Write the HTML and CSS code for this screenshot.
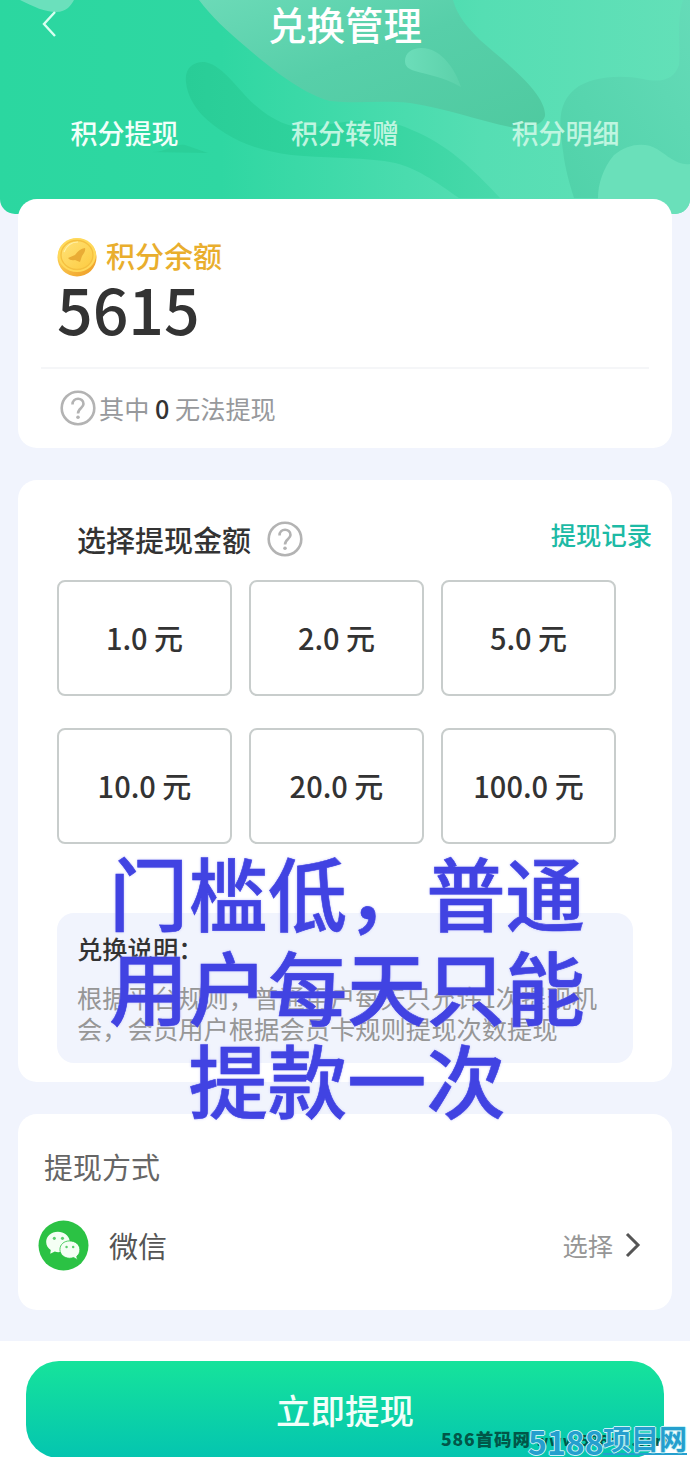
FILE: index.html
```html
<!DOCTYPE html>
<html lang="zh-CN">
<head>
  <meta charset="UTF-8" />
  <title>兑换管理</title>
  <link rel="stylesheet" href="styles.css">
</head>
<body>
  <header class="header">
    <svg class="header-bg" viewBox="0 0 690 214" preserveAspectRatio="none">
      <defs>
        <linearGradient id="base" x1="0" y1="0" x2="1" y2="0">
          <stop offset="0" stop-color="#2bd7a0" />
          <stop offset="0.32" stop-color="#2fd7a2" />
          <stop offset="0.7" stop-color="#55deb3" />
          <stop offset="1" stop-color="#63e0b8" />
        </linearGradient>
        <linearGradient id="leaf" x1="0" y1="0" x2="1" y2="1">
          <stop offset="0" stop-color="#6bdab7" />
          <stop offset="0.45" stop-color="#57cfa9" />
          <stop offset="1" stop-color="#4fcaa0" />
        </linearGradient>
        <linearGradient id="worm" x1="0" y1="0" x2="1" y2="0">
          <stop offset="0" stop-color="#29cd97" />
          <stop offset="0.5" stop-color="#31d49e" />
          <stop offset="1" stop-color="#49d9ab" />
        </linearGradient>
        <linearGradient id="drop" x1="0" y1="0" x2="1" y2="0">
          <stop offset="0" stop-color="#6cddb9" />
          <stop offset="1" stop-color="#5cd1aa" />
        </linearGradient>
        <linearGradient id="curl" x1="0" y1="1" x2="1" y2="0">
          <stop offset="0" stop-color="#50d2a9" />
          <stop offset="1" stop-color="#65dbb8" />
        </linearGradient>
      </defs>
      <rect width="690" height="214" fill="url(#base)" />
      <path d="M20 0C34 7 45 12 56 12C67 12 71 5 74 0Z" fill="#6be0bc" />
      <path d="M186 82C184 67 195 61 205 62C224 66 237 89 255 105C272 120 289 128 310 128C350 119 386 117 412 130C447 144 473 169 500 198H459C437 183 415 165 384 161C350 157 326 158 291 155C250 150 222 135 202 115C193 105 187 94 186 82Z" fill="url(#worm)" />
      <path d="M150 152C166 153 174 143 185 145L208 153Z" fill="#2bcf99" />
      <path d="M199 0H453C457 16 469 29 480 40C505 62 547 94 545 116C543 125 527 130 510 127C477 120 445 108 410 103C381 100 357 104 330 101C303 94 273 70 246 47C228 32 211 16 199 0Z" fill="url(#leaf)" />
      <path d="M405 61C405 53 412 48 421 48C443 48 456 72 461 87C443 77 429 75 415 71C408 69 405 66 405 61Z" fill="url(#drop)" />
      <path d="M690 0H683C676 21 681 48 679 65C674 80 661 83 643 79C617 74 589 78 575 89C556 105 560 126 563 151C565 169 570 185 574 198H690Z" fill="url(#curl)" />
      <path d="M598 198C598 184 603 168 614 155C628 143 646 142 657 149C668 156 678 166 690 164V214H598Z" fill="#6ae0ba" />
    </svg>
    <div class="nav">
      <svg class="back" viewBox="0 0 16 28"><path d="M14 2L3 14L14 26" /></svg>
      <h1>兑换管理</h1>
    </div>
    <div class="tabs">
      <span class="tab active">积分提现</span>
      <span class="tab">积分转赠</span>
      <span class="tab">积分明细</span>
    </div>
  </header>

  <main>
    <section class="card balance">
      <div class="balance-label">
        <svg class="coin" viewBox="0 0 40 40">
          <defs>
            <linearGradient id="coinEdge" x1="0" y1="0" x2="1" y2="1">
              <stop offset="0" stop-color="#ffe066" />
              <stop offset="1" stop-color="#ee9a22" />
            </linearGradient>
            <linearGradient id="coinFace" x1="0" y1="0" x2="1" y2="1">
              <stop offset="0" stop-color="#ffe277" />
              <stop offset="1" stop-color="#fdcb40" />
            </linearGradient>
          </defs>
          <ellipse cx="20" cy="20.5" rx="19.5" ry="19" fill="url(#coinEdge)" />
          <ellipse cx="20" cy="18" rx="19" ry="17" fill="#ffd95a" />
          <ellipse cx="20" cy="18" rx="16" ry="14.5" fill="url(#coinFace)" stroke="#f5c040" stroke-width="1.3" />
          <path d="M7 15Q11 5 21 5" fill="none" stroke="#fff0a8" stroke-width="1.2" />
          <path d="M11 21L18 18Q22 12 28 11Q29 14 25 19L23 25L18 23Q13 24 11 21Z" fill="#e9ac35" />
        </svg>
        <span>积分余额</span>
      </div>
      <div class="balance-num">5615</div>
      <div class="balance-tip">
        <svg class="help" viewBox="0 0 36 36"><circle cx="18" cy="18" r="16.3" /><path d="M12.5 14.5C12.5 7 23.5 7 23.5 14C23.5 18 18 18 18 23.5" /><circle class="dot" cx="18" cy="27.3" r="1.8" /></svg>
        <span>其中 <b>0</b> 无法提现</span>
      </div>
    </section>

    <section class="card amount">
      <div class="amount-head">
        <h2>选择提现金额</h2>
        <svg class="help" viewBox="0 0 36 36"><circle cx="18" cy="18" r="16.3" /><path d="M12.5 14.5C12.5 7 23.5 7 23.5 14C23.5 18 18 18 18 23.5" /><circle class="dot" cx="18" cy="27.3" r="1.8" /></svg>
        <a class="record">提现记录</a>
      </div>
      <div class="amount-grid">
        <div class="option">1.0 元</div>
        <div class="option">2.0 元</div>
        <div class="option">5.0 元</div>
        <div class="option">10.0 元</div>
        <div class="option">20.0 元</div>
        <div class="option">100.0 元</div>
      </div>
      <div class="notice">
        <h3>兑换说明：</h3>
        <p>根据平台规则，普通用户每天只允许1次提现机<br>会，会员用户根据会员卡规则提现次数提现</p>
      </div>
    </section>

    <section class="card method">
      <h2>提现方式</h2>
      <div class="method-row">
        <svg class="wechat" viewBox="0 0 50 50">
          <circle cx="25" cy="25" r="24.5" fill="#2bc244" />
          <path d="M19.5 11.5C13 11.5 8 16 8 21.5C8 25 10 27.5 12.5 29.5L12 33L16.5 31Q20 32 23 31C30 30 32 25 31 20C30 15 25.5 11.5 19.5 11.5Z" fill="#f4fff4" />
          <path d="M31 20.5C25.5 20.5 21.5 24 21.5 29C21.5 34 26 37.5 31 37.5Q33 37.5 35 36.8L38.5 39L38 35.5C40 34 41 32 41 29C41 24 36.5 20.5 31 20.5Z" fill="#f4fff4" stroke="#2bc244" stroke-width="0.8" />
          <g fill="#5bcf6e"><circle cx="16" cy="18" r="1.5" /><circle cx="24" cy="18" r="1.5" /><circle cx="28" cy="26.5" r="1.2" /><circle cx="34.5" cy="26.5" r="1.2" /></g>
        </svg>
        <span class="method-name">微信</span>
        <span class="choose">选择</span>
        <svg class="arrow" viewBox="0 0 16 26"><path d="M2 2L13 13L2 24" /></svg>
      </div>
    </section>
  </main>

  <footer class="footer">
    <button class="submit">立即提现</button>
  </footer>

  <div class="caption">门槛低，普通<br>用户每天只能<br>提款一次</div>
  <div class="mark">586首码网 <span>www.586sm.com</span></div>
  <div class="site"><span class="site-num">5188</span><span class="site-name">项目网</span></div>
</body>
</html>
```
FILE: styles.css
```css
* {
  box-sizing: border-box;
}
body {
  position: relative;
  margin: 0;
  width: 690px;
  height: 1457px;
  overflow: hidden;
  background: #f1f4fd;
  color: #333;
  font-family: "Noto Sans CJK SC", sans-serif;
}
h1, h2, h3, p {
  margin: 0;
  font-weight: 500;
}
.header {
  position: relative;
  height: 214px;
  border-radius: 0 0 15px 15px;
  overflow: hidden;
  color: #fff;
}
.header-bg {
  position: absolute;
  top: 0;
  left: 0;
  width: 690px;
  height: 214px;
}
.nav {
  position: relative;
  height: 48px;
  text-align: center;
}
.nav h1 {
  font-size: 38.5px;
  line-height: 47px;
}
.back {
  position: absolute;
  left: 41px;
  top: 10px;
  width: 16px;
  height: 28px;
  fill: none;
  stroke: #d8fff0;
  stroke-width: 2.4;
}
.tabs {
  position: relative;
  display: grid;
  grid-template-columns: repeat(3, 220.5px);
  justify-content: center;
  margin-top: 66px;
  text-align: center;
  font-size: 27px;
  line-height: 38px;
}
.tab {
  color: #bff5e0;
  font-weight: 500;
}
.tab.active {
  color: #f2fffa;
}
main {
  position: relative;
  display: flex;
  flex-direction: column;
  gap: 32px;
  margin: -15px 18px 0;
}
.card {
  background: #fff;
  border-radius: 19px;
}
.balance {
  height: 249px;
  padding: 38px 23px 0;
}
.balance-label {
  display: flex;
  align-items: center;
  gap: 9px;
  height: 40px;
  padding-left: 16px;
  color: #e9ae2d;
  font-size: 29px;
  font-weight: 500;
  line-height: 36px;
}
.balance-label span {
  margin-bottom: 4px;
}
.coin {
  width: 40px;
  height: 40px;
}
.balance-num {
  height: 92px;
  padding-left: 16px;
  border-bottom: 2px solid #f5f6f8;
  font-size: 62.6px;
  font-weight: 500;
  line-height: 61px;
}
.balance-tip {
  display: flex;
  align-items: center;
  gap: 3px;
  height: 78px;
  padding-left: 19px;
  color: #97999c;
  font-size: 25.2px;
}
.balance-tip b {
  color: #333;
  font-weight: 500;
}
.help {
  width: 36px;
  height: 36px;
  fill: none;
  stroke: #b3b3b3;
  stroke-width: 2.6;
}
.help .dot {
  fill: #b3b3b3;
  stroke: none;
}
.amount {
  height: 602px;
  padding: 38px 20px 0 39px;
}
.amount-head {
  display: flex;
  align-items: center;
  height: 42px;
  padding-left: 20px;
}
.amount-head h2 {
  margin: 0 16px 1px 0;
  font-size: 29px;
}
.record {
  margin: 0 0 11px auto;
  color: #1dbaa5;
  font-size: 25.3px;
  font-weight: 500;
}
.amount-grid {
  display: grid;
  grid-template-columns: repeat(3, 175px);
  grid-auto-rows: 116px;
  gap: 32px 17px;
  margin-top: 20px;
}
.option {
  border: 2px solid #c8cdcc;
  border-radius: 8px;
  text-align: center;
  font-size: 29px;
  font-weight: 500;
  line-height: 111px;
}
.notice {
  width: 576px;
  height: 150px;
  margin-top: 69px;
  padding: 18px 20px;
  border-radius: 17px;
  background: #f1f4fd;
}
.notice h3 {
  font-size: 25.3px;
  line-height: 34px;
}
.notice p {
  margin-top: 17px;
  color: #969696;
  font-size: 25.3px;
  font-weight: 400;
  line-height: 30.5px;
  white-space: nowrap;
}
.method {
  height: 196px;
  padding: 30px 31px 0 20px;
}
.method h2 {
  padding-left: 6px;
  color: #666;
  font-size: 29px;
  font-weight: 400;
  line-height: 44px;
}
.method-row {
  display: flex;
  align-items: center;
  height: 50px;
  margin-top: 32px;
}
.wechat {
  width: 51px;
  height: 51px;
}
.method-name {
  margin-left: 20px;
  color: #555;
  font-size: 29px;
}
.choose {
  margin-left: auto;
  color: #969696;
  font-size: 25.3px;
}
.arrow {
  width: 16px;
  height: 26px;
  margin-left: 12px;
  fill: none;
  stroke: #555;
  stroke-width: 3;
}
.footer {
  height: 116px;
  margin-top: 31px;
  padding: 20px 26px 0;
  background: #fff;
}
.submit {
  display: block;
  width: 638px;
  height: 97px;
  padding: 0;
  border: none;
  border-radius: 33px;
  background: linear-gradient(#16e39b, #04c5b0);
  color: #f2fffa;
  font-family: inherit;
  font-size: 34.5px;
  font-weight: 500;
  line-height: 95px;
}
.caption {
  position: absolute;
  top: 844px;
  left: 0;
  width: 694px;
  color: #4143e2;
  font-size: 79.3px;
  font-weight: 500;
  line-height: 93.5px;
  text-align: center;
  text-shadow: 0 0 3px #b9baf8;
  -webkit-text-stroke: 0.6px #4143e2;
}
.mark {
  position: absolute;
  left: 441px;
  top: 1427px;
  color: rgba(0, 55, 45, 0.8);
  font-size: 17.5px;
  font-weight: 900;
  letter-spacing: 0.9px;
  line-height: 24px;
  white-space: nowrap;
}
.mark span {
  font-size: 14px;
}
.site {
  position: absolute;
  left: 528px;
  top: 1426px;
  display: flex;
  color: #259fce;
  font-size: 28px;
  font-weight: 700;
  line-height: 30px;
  white-space: nowrap;
  text-shadow: -1px 0 #c9f3f5, 1px 0 #c9f3f5, 0 -1px #c9f3f5, 0 1px #c9f3f5;
}
.site-num {
  width: 75px;
  font-size: 32px;
}
.site-name {
  width: 84px;
  height: 29px;
  border-bottom: 2px solid #259fce;
  line-height: 25px;
}
```
